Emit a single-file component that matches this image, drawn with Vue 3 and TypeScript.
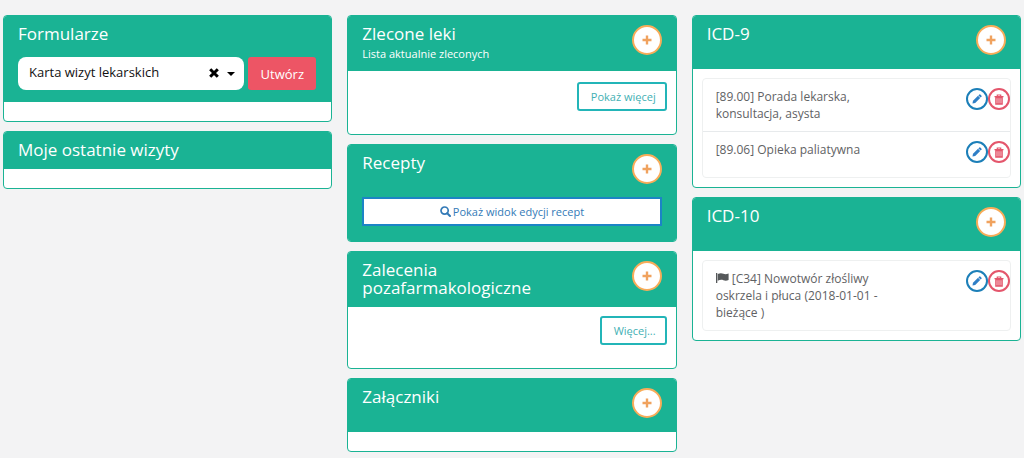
<script setup lang="ts">
import { ref } from 'vue'

interface Diagnosis {
  text: string
  flagged?: boolean
}

interface DiagnosisGroup {
  title: string
  items: Diagnosis[]
}

const forms: string[] = ['Karta wizyt lekarskich']
const selectedForm = ref<string>(forms[0])

const groups: DiagnosisGroup[] = [
  {
    title: 'ICD-9',
    items: [
      { text: '[89.00] Porada lekarska, konsultacja, asysta' },
      { text: '[89.06] Opieka paliatywna' },
    ],
  },
  {
    title: 'ICD-10',
    items: [{ text: '[C34] Nowotwór złośliwy oskrzela i płuca (2018-01-01 - bieżące )', flagged: true }],
  },
]
</script>

<template>
  <main class="board">
    <div class="column">
      <section class="panel">
        <header class="panel-head">
          <h2>Formularze</h2>
          <form class="form-row" @submit.prevent>
            <div class="combo">
              <select v-model="selectedForm" aria-label="Formularz">
                <option v-for="form in forms" :key="form" :value="form">{{ form }}</option>
              </select>
              <button type="button" class="clear" aria-label="Wyczyść" @click="selectedForm = ''">
                <svg viewBox="0 0 10 10" width="10" height="10">
                  <path d="M1.2 1.2 8.8 8.8M8.8 1.2 1.2 8.8" stroke="currentColor" stroke-width="3" />
                </svg>
              </button>
              <svg class="caret" viewBox="0 0 8 4" width="8" height="4"><path d="M0 0h8L4 4z" /></svg>
            </div>
            <button type="submit" class="create">Utwórz</button>
          </form>
        </header>
        <div class="panel-body empty"></div>
      </section>

      <section class="panel">
        <header class="panel-head"><h2>Moje ostatnie wizyty</h2></header>
        <div class="panel-body empty"></div>
      </section>
    </div>

    <div class="column">
      <section class="panel">
        <header class="panel-head">
          <div class="head-row">
            <div class="titles">
              <h2>Zlecone leki</h2>
              <p>Lista aktualnie zleconych</p>
            </div>
            <button type="button" class="add" aria-label="Dodaj lek">
              <svg viewBox="0 0 10 10" width="10" height="10"><path d="M5 .5v9M.5 5h9" /></svg>
            </button>
          </div>
        </header>
        <div class="panel-body actions-body roomy">
          <button type="button" class="more">Pokaż więcej</button>
        </div>
      </section>

      <section class="panel">
        <header class="panel-head recipes">
          <div class="head-row">
            <h2>Recepty</h2>
            <button type="button" class="add" aria-label="Dodaj receptę">
              <svg viewBox="0 0 10 10" width="10" height="10"><path d="M5 .5v9M.5 5h9" /></svg>
            </button>
          </div>
          <button type="button" class="wide">
            <svg viewBox="0 0 11 11" width="11" height="11">
              <circle cx="4.6" cy="4.6" r="3.6" fill="none" stroke="currentColor" stroke-width="1.7" />
              <path d="M7.2 7.2 10 10" stroke="currentColor" stroke-width="2" stroke-linecap="round" />
            </svg>
            <span>Pokaż widok edycji recept</span>
          </button>
        </header>
      </section>

      <section class="panel">
        <header class="panel-head">
          <div class="head-row">
            <h2>Zalecenia pozafarmakologiczne</h2>
            <button type="button" class="add" aria-label="Dodaj zalecenie">
              <svg viewBox="0 0 10 10" width="10" height="10"><path d="M5 .5v9M.5 5h9" /></svg>
            </button>
          </div>
        </header>
        <div class="panel-body actions-body">
          <button type="button" class="more">Więcej...</button>
        </div>
      </section>

      <section class="panel">
        <header class="panel-head">
          <div class="head-row">
            <h2>Załączniki</h2>
            <button type="button" class="add" aria-label="Dodaj załącznik">
              <svg viewBox="0 0 10 10" width="10" height="10"><path d="M5 .5v9M.5 5h9" /></svg>
            </button>
          </div>
        </header>
        <div class="panel-body empty"></div>
      </section>
    </div>

    <div class="column">
      <section v-for="group in groups" :key="group.title" class="panel">
        <header class="panel-head">
          <div class="head-row">
            <h2>{{ group.title }}</h2>
            <button type="button" class="add" :aria-label="'Dodaj ' + group.title">
              <svg viewBox="0 0 10 10" width="10" height="10"><path d="M5 .5v9M.5 5h9" /></svg>
            </button>
          </div>
        </header>
        <div class="panel-body list-body">
          <ul class="list">
            <li v-for="item in group.items" :key="item.text">
              <span class="label">
                <svg v-if="item.flagged" class="flag" viewBox="0 0 13 10" width="13" height="10">
                  <path d="M0 0h1.300V10H0z" />
                  <path d="M1.700 1C4 0 5.800.1 7.400.8 9.200 1.500 10.800 1.200 12.600.4V7C10.800 7.900 9.200 8 7.400 7.300 5.800 6.600 4 6.700 1.700 7.700z" />
                </svg>
                {{ item.text }}
              </span>
              <span class="tools">
                <button type="button" class="tool edit" aria-label="Edytuj">
                  <svg viewBox="0 0 10 10" width="10" height="10">
                    <path d="M.5 9.500 1 6.800 6 1.800 8.200 4 3.200 9z" />
                    <path d="M6.400 1.400 7.300.5Q7.800.1 8.300.5L9.500 1.700Q9.900 2.200 9.500 2.700L8.600 3.600z" />
                  </svg>
                </button>
                <button type="button" class="tool remove" aria-label="Usuń">
                  <svg viewBox="0 0 10 11" width="10" height="11">
                    <path d="M3.300 2.300V1h3.400v1.300M.5 2.700h9" fill="none" stroke="currentColor" stroke-width="1.200" />
                    <path fill-rule="evenodd" fill="currentColor" d="M1.200 3h7.600v7.800H1.200zM2.700 4.200v5h.6v-5zM4.700 4.200v5h.6v-5zM6.700 4.200v5h.6v-5z" />
                  </svg>
                </button>
              </span>
            </li>
          </ul>
        </div>
      </section>
    </div>
  </main>
</template>

<style>
body {
  margin: 0;
  background: #f3f3f4;
}
</style>

<style scoped>
.board {
  display: grid;
  grid-template-columns: repeat(3, minmax(0, 1fr));
  align-items: start;
  gap: 15px;
  padding: 15px 3px 0;
  font-family: "Open Sans", "Noto Sans", sans-serif;
  font-size: 12px;
  line-height: 17px;
  color: #5f6264;
}
.board * {
  box-sizing: border-box;
}
.column {
  display: flex;
  flex-direction: column;
  gap: 9px;
}
.panel {
  border: 1px solid #1ab394;
  border-radius: 4px;
  background: #fff;
  overflow: hidden;
}
.panel-head {
  padding: 9px 14px 10px;
  background: #1ab394;
  color: #fff;
}
h2 {
  margin: 0;
  font-size: 17px;
  font-weight: 400;
  line-height: 18px;
}
p {
  margin: 0;
  padding-top: 4px;
  font-size: 11px;
  line-height: 14px;
}
button,
select {
  margin: 0;
  font-family: inherit;
  cursor: pointer;
}
.head-row {
  display: flex;
  justify-content: space-between;
  align-items: flex-start;
}
.head-row h2 {
  max-width: 200px;
}
.add {
  display: flex;
  flex: none;
  align-items: center;
  justify-content: center;
  width: 30px;
  height: 30px;
  margin-bottom: 4px;
  padding: 0;
  border: 2px solid #f8ac59;
  border-radius: 50%;
  background: #fff;
}
.add path {
  stroke: #f0a25e;
  stroke-width: 2.4;
}
.form-row {
  display: flex;
  gap: 4px;
  padding: 14px 1px 2px 0;
}
.combo {
  display: flex;
  flex: 1;
  align-items: center;
  min-width: 0;
  height: 33px;
  padding-right: 9px;
  border-radius: 8px;
  background: #fff;
  color: #111;
}
.combo select {
  flex: 1;
  min-width: 0;
  height: 100%;
  padding: 0 0 3px 11px;
  border: 0;
  background: transparent;
  color: inherit;
  font-size: 13px;
  appearance: none;
}
.clear {
  display: flex;
  padding: 4px 4px 6px;
  border: 0;
  background: transparent;
  color: #000;
}
.caret {
  margin-left: 4px;
  fill: #000;
}
.create {
  width: 68px;
  height: 33px;
  padding: 0;
  border: 0;
  border-radius: 3px;
  background: #ed5565;
  color: #fff;
  font-size: 13px;
}
.empty {
  height: 19px;
}
.actions-body {
  display: flex;
  justify-content: flex-end;
  padding: 9px 9px 23px;
}
.roomy {
  padding-top: 11px;
}
.more {
  height: 29px;
  padding: 0 9px 0 12px;
  border: 2px solid #23b5b8;
  border-radius: 3px;
  background: #fff;
  color: #3fb0b4;
  font-size: 11px;
}
.recipes {
  padding-bottom: 15px;
}
.wide {
  display: flex;
  align-items: center;
  justify-content: center;
  gap: 2px;
  width: 100%;
  height: 29px;
  margin-top: 9px;
  padding: 0;
  border: 2px solid #1c84c6;
  background: #fff;
  color: #337ab7;
  font-size: 11px;
}
.list-body {
  padding: 9px;
}
.list {
  margin: 0;
  padding: 0;
  border: 1px solid #eef0f0;
  border-radius: 4px;
  list-style: none;
}
.list li {
  display: flex;
  justify-content: space-between;
  align-items: flex-start;
  padding: 9px 0 9px 13px;
}
.list li + li {
  border-top: 1px solid #e7eaec;
}
.label {
  flex: 0 1 60%;
}
.flag {
  fill: #55585a;
}
.tools {
  display: flex;
  padding-bottom: 5px;
}
.tool {
  display: flex;
  align-items: center;
  justify-content: center;
  width: 22px;
  height: 22px;
  padding: 0;
  border: 2px solid;
  border-radius: 50%;
  background: #fff;
}
.edit {
  color: #1c7fb8;
}
.edit path {
  fill: #2f7fc6;
}
.remove {
  color: #e4566c;
}
</style>
